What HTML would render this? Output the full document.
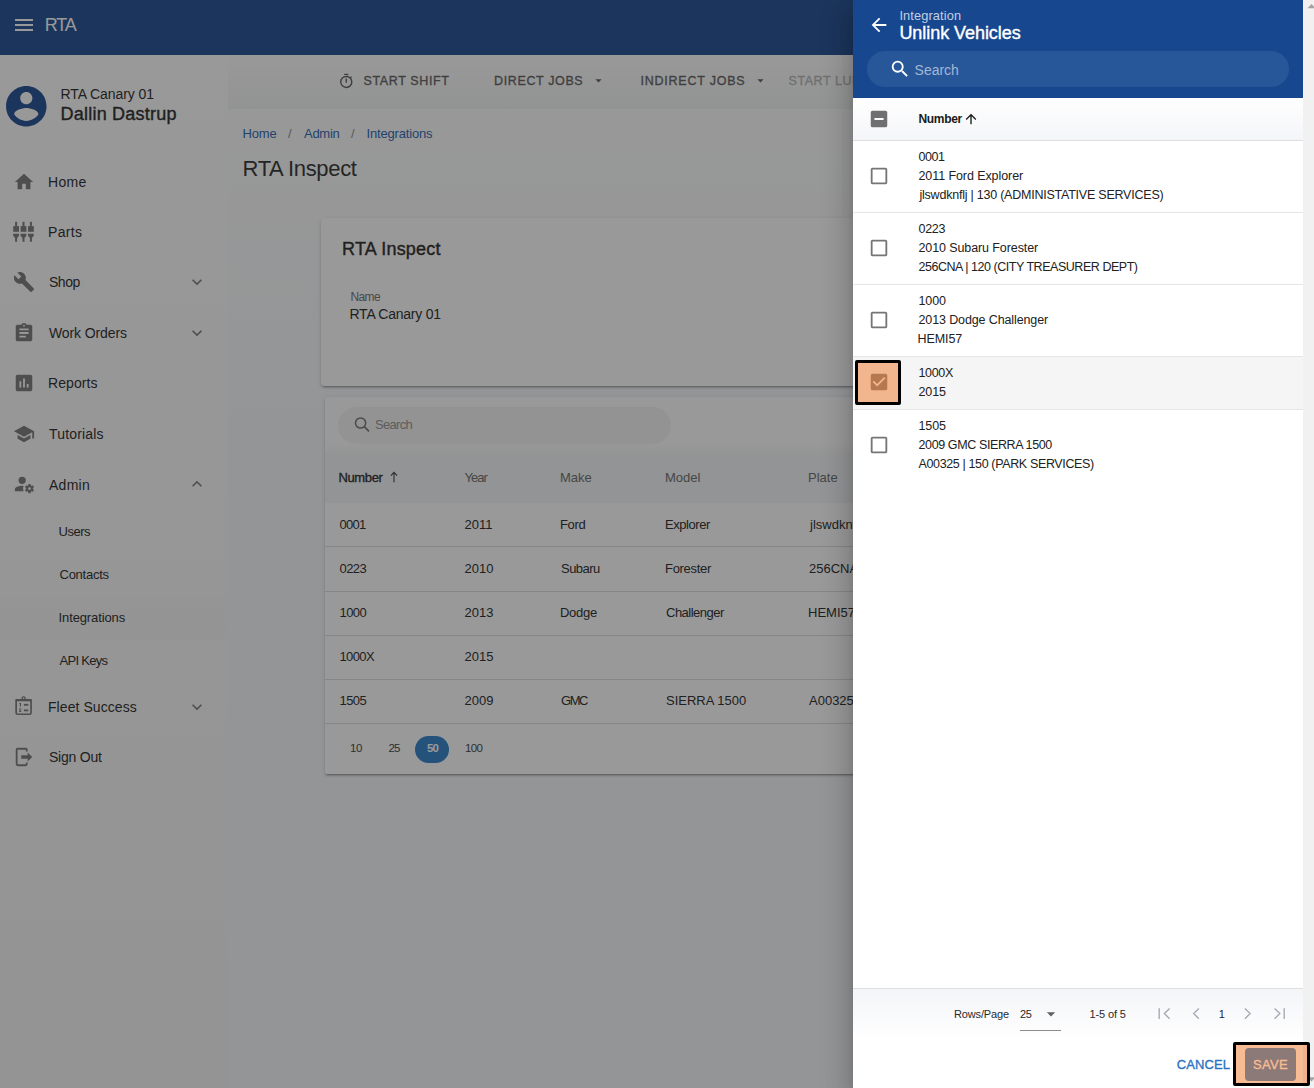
<!DOCTYPE html>
<html lang="en"><head><meta charset="utf-8"><title>RTA Inspect</title>
<style>
html,body{margin:0;padding:0}
body{width:1314px;height:1088px;overflow:hidden;position:relative;background:#fff;font-family:"Liberation Sans",sans-serif;}
.t{position:absolute;white-space:nowrap;display:block}
.i{position:absolute;display:block}
.abs{position:absolute}
#app{position:absolute;left:0;top:0;width:1303px;height:1088px;background:linear-gradient(#fefefe 108px,#f5f8fb 430px);overflow:hidden}
#scrim{position:absolute;left:0;top:0;width:1303px;height:1088px;background:rgba(33,33,33,.46)}
#drawer{position:absolute;left:853px;top:0;width:450px;height:1088px;background:#fff;box-shadow:0 8px 10px -5px rgba(0,0,0,.2),0 16px 24px 2px rgba(0,0,0,.14),0 6px 30px 5px rgba(0,0,0,.12)}
#sb{position:absolute;left:1303px;top:0;width:11px;height:1088px;background:#f1f1f1;overflow:hidden}
.card{position:absolute;background:#fff;border-radius:4px;box-shadow:0 3px 1px -2px rgba(0,0,0,.2),0 2px 2px 0 rgba(0,0,0,.14),0 1px 5px 0 rgba(0,0,0,.12)}
.hl{position:absolute;box-sizing:border-box;border:3px solid #000;border-radius:2px;background:#f7bc93}
</style></head><body>

<div id="app">
<div class="abs" style="left:0;top:55px;width:228px;height:1033px;background:linear-gradient(#fff,#f5f5f5)"></div>
<div class="abs" style="left:0;top:596px;width:228px;height:43px;background:rgba(0,0,0,.01)"></div>
<div class="abs" style="left:228px;top:55px;width:1075px;height:53.5px;background:linear-gradient(#fff,#f3f4f5)"></div>
<div class="abs" style="left:0;top:0;width:1303px;height:55px;background:#18478f"></div>
<svg class="i" style="left:12px;top:13px;" width="24" height="24" viewBox="0 0 24 24"><path fill="#fff" d="M3 18h18v-2H3v2zm0-5h18v-2H3v2zm0-7v2h18V6H3z"/></svg>
<span id="t1" class="t" style="left:44.80px;top:15.76px;font-size:18px;line-height:18px;color:#fff;letter-spacing:-1.167px;">RTA</span>
<svg class="i" style="left:1.7px;top:82.2px;" width="48.6" height="48.6" viewBox="0 0 24 24"><path fill="#18478f" d="M12 2C6.48 2 2 6.48 2 12s4.48 10 10 10 10-4.48 10-10S17.52 2 12 2zm0 3c1.66 0 3 1.34 3 3s-1.34 3-3 3-3-1.34-3-3 1.34-3 3-3zm0 14.2c-2.5 0-4.71-1.28-6-3.22.03-1.99 4-3.08 6-3.08 1.99 0 5.97 1.09 6 3.08-1.29 1.94-3.5 3.22-6 3.22z"/></svg>
<span id="t2" class="t" style="left:60.50px;top:87.15px;font-size:14px;line-height:14px;color:#212121;letter-spacing:-0.075px;">RTA Canary 01</span>
<span id="t3" class="t" style="left:60.50px;top:104.76px;font-size:18px;line-height:18px;-webkit-text-stroke:0.38px #212121;color:#212121;letter-spacing:0.228px;">Dallin Dastrup</span>
<svg class="i" style="left:12.5px;top:171px;" width="22" height="22" viewBox="0 0 24 24"><path fill="#757575" d="M10 20v-6h4v6h5v-8h3L12 3 2 12h3v8z"/></svg>
<span id="t4" class="t" style="left:48.00px;top:175.15px;font-size:14px;line-height:14px;color:#212121;letter-spacing:0.314px;">Home</span>
<svg class="i" style="left:10px;top:219px" width="28" height="26" viewBox="10 219 28 26"><g fill="#757575"><rect x="15.100000000000001" y="221.8" width="2" height="4.6"/><rect x="13.2" y="226.1" width="5.8" height="5.7"/><path d="M13.2 233.7h5.8v2.1l-1.9 2.3v3.7h-2v-3.7l-1.9-2.3z"/><rect x="22.5" y="221.8" width="2" height="4.6"/><rect x="20.6" y="226.1" width="5.8" height="5.7"/><path d="M20.6 233.7h5.8v2.1l-1.9 2.3v3.7h-2v-3.7l-1.9-2.3z"/><rect x="29.9" y="221.8" width="2" height="4.6"/><rect x="28.0" y="226.1" width="5.8" height="5.7"/><path d="M28.0 233.7h5.8v2.1l-1.9 2.3v3.7h-2v-3.7l-1.9-2.3z"/></g></svg>
<span id="t5" class="t" style="left:48.00px;top:225.15px;font-size:14px;line-height:14px;color:#212121;letter-spacing:0.331px;">Parts</span>
<svg class="i" style="left:12.5px;top:271px;" width="22" height="22" viewBox="0 0 24 24"><path fill="#757575" d="M22.7 19l-9.1-9.1c.9-2.3.4-5-1.5-6.9-2-2-5-2.4-7.4-1.3L9 6 6 9 1.6 4.7C.4 7.1.9 10.1 2.9 12.1c1.9 1.9 4.6 2.4 6.9 1.5l9.1 9.1c.4.4 1 .4 1.4 0l2.3-2.3c.5-.4.5-1.1.1-1.4z"/></svg>
<span id="t6" class="t" style="left:49.00px;top:275.15px;font-size:14px;line-height:14px;color:#212121;letter-spacing:-0.470px;">Shop</span>
<svg class="i" style="left:186.5px;top:272px;" width="20" height="20" viewBox="0 0 24 24"><path fill="#757575" d="M7.41,8.58L12,13.17L16.59,8.58L18,10L12,16L6,10L7.41,8.58Z"/></svg>
<svg class="i" style="left:12.5px;top:322px;" width="22" height="22" viewBox="0 0 24 24"><path fill="#757575" d="M19 3h-4.18C14.4 1.84 13.3 1 12 1c-1.3 0-2.4.84-2.82 2H5c-1.1 0-2 .9-2 2v14c0 1.1.9 2 2 2h14c1.1 0 2-.9 2-2V5c0-1.1-.9-2-2-2zm-7 0c.55 0 1 .45 1 1s-.45 1-1 1-1-.45-1-1 .45-1 1-1zm2 14H7v-2h7v2zm3-4H7v-2h10v2zm0-4H7V7h10v2z"/></svg>
<span id="t7" class="t" style="left:49.00px;top:326.15px;font-size:14px;line-height:14px;color:#212121;letter-spacing:-0.108px;">Work Orders</span>
<svg class="i" style="left:186.5px;top:323px;" width="20" height="20" viewBox="0 0 24 24"><path fill="#757575" d="M7.41,8.58L12,13.17L16.59,8.58L18,10L12,16L6,10L7.41,8.58Z"/></svg>
<svg class="i" style="left:12.5px;top:372px;" width="22" height="22" viewBox="0 0 24 24"><path fill="#757575" d="M19 3H5c-1.1 0-2 .9-2 2v14c0 1.1.9 2 2 2h14c1.1 0 2-.9 2-2V5c0-1.1-.9-2-2-2zM9 17H7v-7h2v7zm4 0h-2V7h2v10zm4 0h-2v-4h2v4z"/></svg>
<span id="t8" class="t" style="left:48.00px;top:376.15px;font-size:14px;line-height:14px;color:#212121;letter-spacing:0.080px;">Reports</span>
<svg class="i" style="left:12.5px;top:423px;" width="22" height="22" viewBox="0 0 24 24"><path fill="#757575" d="M5 13.18v4L12 21l7-3.82v-4L12 17l-7-3.82zM12 3L1 9l11 6 9-4.91V17h2V9L12 3z"/></svg>
<span id="t9" class="t" style="left:49.00px;top:427.15px;font-size:14px;line-height:14px;color:#212121;letter-spacing:0.167px;">Tutorials</span>
<svg class="i" style="left:12.5px;top:473px;" width="22" height="22" viewBox="0 0 24 24"><path fill="#757575" d="M10 4A4 4 0 0 0 6 8A4 4 0 0 0 10 12A4 4 0 0 0 14 8A4 4 0 0 0 10 4M17 12C16.87 12 16.76 12.09 16.74 12.21L16.55 13.53C16.25 13.66 15.96 13.82 15.7 14L14.46 13.5C14.35 13.5 14.22 13.5 14.15 13.63L13.15 15.36C13.09 15.47 13.11 15.6 13.21 15.68L14.27 16.5C14.25 16.67 14.24 16.83 14.24 17C14.24 17.17 14.25 17.33 14.27 17.5L13.21 18.32C13.12 18.4 13.09 18.53 13.15 18.64L14.15 20.37C14.21 20.5 14.34 20.5 14.46 20.5L15.7 20C15.96 20.18 16.24 20.35 16.55 20.47L16.74 21.79C16.76 21.91 16.86 22 17 22H19C19.11 22 19.22 21.91 19.24 21.79L19.43 20.47C19.73 20.34 20 20.18 20.27 20L21.5 20.5C21.63 20.5 21.76 20.5 21.83 20.37L22.83 18.64C22.89 18.53 22.86 18.4 22.77 18.32L21.7 17.5C21.72 17.33 21.74 17.17 21.74 17C21.74 16.83 21.73 16.67 21.7 16.5L22.76 15.68C22.85 15.6 22.88 15.47 22.82 15.36L21.82 13.63C21.76 13.5 21.63 13.5 21.5 13.5L20.27 14C20 13.82 19.73 13.65 19.42 13.53L19.23 12.21C19.22 12.09 19.11 12 19 12H17M10 14C5.58 14 2 15.79 2 18V20H11.68A7 7 0 0 1 11 17A7 7 0 0 1 11.64 14.09C11.11 14.03 10.56 14 10 14M18 15.5C18.83 15.5 19.5 16.17 19.5 17C19.5 17.83 18.83 18.5 18 18.5C17.16 18.5 16.5 17.83 16.5 17C16.5 16.17 17.17 15.5 18 15.5Z"/></svg>
<span id="t10" class="t" style="left:49.00px;top:477.86px;font-size:14px;line-height:14px;color:#212121;letter-spacing:0.276px;">Admin</span>
<svg class="i" style="left:186.5px;top:474px;" width="20" height="20" viewBox="0 0 24 24"><path fill="#757575" d="M7.41,15.41L12,10.83L16.59,15.41L18,14L12,8L6,14L7.41,15.41Z"/></svg>
<svg class="i" style="left:12px;top:694px" width="24" height="24" viewBox="12 694 24 24"><g fill="none" stroke="#757575"><rect x="16.15" y="699.95" width="14.9" height="14.3" rx="1.4" stroke-width="1.7"/><circle cx="23.6" cy="698.4" r="1.5" stroke-width="1.4"/></g><g fill="#757575"><rect x="15.3" y="699.1" width="16.6" height="2.2" rx="1"/><rect x="23.9" y="703.9" width="4.4" height="1.8"/><rect x="23.9" y="709.5" width="4.4" height="1.8"/><rect x="19.9" y="703.1" width="1.1" height="3.5"/><rect x="19.2" y="703.1" width="1.2" height="1"/><rect x="19" y="708.5" width="2.3" height="0.9"/><rect x="19" y="711.1" width="2.3" height="0.9"/><path d="M20.8 709l0.6 0.4-1.7 2-0.7-0.3z"/></g></svg>
<span id="t11" class="t" style="left:48.00px;top:700.15px;font-size:14px;line-height:14px;color:#212121;letter-spacing:0.069px;">Fleet Success</span>
<svg class="i" style="left:186.5px;top:697px;" width="20" height="20" viewBox="0 0 24 24"><path fill="#757575" d="M7.41,8.58L12,13.17L16.59,8.58L18,10L12,16L6,10L7.41,8.58Z"/></svg>
<svg class="i" style="left:12.5px;top:746px;" width="22" height="22" viewBox="0 0 24 24"><path fill="#757575" d="M16,17V14H9V10H16V7L21,12L16,17M14,2A2,2 0 0,1 16,4V6H14V4H5V20H14V18H16V20A2,2 0 0,1 14,22H5A2,2 0 0,1 3,20V4A2,2 0 0,1 5,2H14Z"/></svg>
<span id="t12" class="t" style="left:49.00px;top:750.15px;font-size:14px;line-height:14px;color:#212121;letter-spacing:-0.227px;">Sign Out</span>
<span id="t13" class="t" style="left:58.50px;top:525.00px;font-size:13px;line-height:13px;color:#212121;letter-spacing:-0.487px;">Users</span>
<span id="t14" class="t" style="left:59.50px;top:568.00px;font-size:13px;line-height:13px;color:#212121;letter-spacing:-0.257px;">Contacts</span>
<span id="t15" class="t" style="left:58.50px;top:611.00px;font-size:13px;line-height:13px;color:#212121;letter-spacing:-0.108px;">Integrations</span>
<span id="t16" class="t" style="left:59.50px;top:654.00px;font-size:13px;line-height:13px;color:#212121;letter-spacing:-0.709px;">API Keys</span>
<svg class="i" style="left:337.9px;top:72.8px;" width="16.5" height="16.5" viewBox="0 0 24 24"><path fill="#5a5a5a" d="M12,20A7,7 0 0,1 5,13A7,7 0 0,1 12,6A7,7 0 0,1 19,13A7,7 0 0,1 12,20M19.03,7.39L20.45,5.97C20,5.46 19.55,5 19.04,4.56L17.62,6C16.07,4.74 14.12,4 12,4A9,9 0 0,0 3,13A9,9 0 0,0 12,22C17,22 21,17.97 21,13C21,10.88 20.26,8.93 19.03,7.39M11,14H13V8H11M15,1H9V3H15V1Z"/></svg>
<span id="t17" class="t" style="left:363.50px;top:74.97px;font-size:12.5px;line-height:12.5px;-webkit-text-stroke:0.33px #5a5a5a;color:#5a5a5a;letter-spacing:0.623px;">START SHIFT</span>
<span id="t18" class="t" style="left:494.00px;top:74.97px;font-size:12.5px;line-height:12.5px;-webkit-text-stroke:0.33px #5a5a5a;color:#5a5a5a;letter-spacing:0.629px;">DIRECT JOBS</span>
<svg class="i" style="left:591.3px;top:73.1px;" width="15" height="15" viewBox="0 0 24 24"><path fill="#5a5a5a" d="M7,10L12,15L17,10H7Z"/></svg>
<span id="t19" class="t" style="left:640.40px;top:74.97px;font-size:12.5px;line-height:12.5px;-webkit-text-stroke:0.33px #5a5a5a;color:#5a5a5a;letter-spacing:0.782px;">INDIRECT JOBS</span>
<svg class="i" style="left:752.9px;top:73.1px;" width="15" height="15" viewBox="0 0 24 24"><path fill="#5a5a5a" d="M7,10L12,15L17,10H7Z"/></svg>
<span id="t20" class="t" style="left:788.50px;top:74.97px;font-size:12.5px;line-height:12.5px;-webkit-text-stroke:0.33px #b4b4b4;color:#b4b4b4;letter-spacing:0.565px;">START LUNCH</span>
<span id="t21" class="t" style="left:242.50px;top:127.00px;font-size:13px;line-height:13px;color:#1f5fae;letter-spacing:-0.149px;">Home</span>
<span id="t22" class="t" style="left:288.00px;top:127.00px;font-size:13px;line-height:13px;color:#8a8a8a;">/</span>
<span id="t23" class="t" style="left:304.00px;top:127.00px;font-size:13px;line-height:13px;color:#1f5fae;letter-spacing:-0.280px;">Admin</span>
<span id="t24" class="t" style="left:351.00px;top:127.00px;font-size:13px;line-height:13px;color:#8a8a8a;">/</span>
<span id="t25" class="t" style="left:366.50px;top:127.00px;font-size:13px;line-height:13px;color:#1f5fae;letter-spacing:-0.176px;">Integrations</span>
<span id="t26" class="t" style="left:242.50px;top:158.38px;font-size:22px;line-height:22px;color:#2a2a2a;letter-spacing:-0.340px;">RTA Inspect</span>
<div class="card" style="left:321px;top:218px;width:990px;height:167.5px"></div>
<span id="t27" class="t" style="left:342.00px;top:239.76px;font-size:18px;line-height:18px;-webkit-text-stroke:0.38px #212121;color:#212121;letter-spacing:0.213px;">RTA Inspect</span>
<span id="t28" class="t" style="left:350.50px;top:290.59px;font-size:12px;line-height:12px;color:#6b6b6b;letter-spacing:-0.612px;">Name</span>
<span id="t29" class="t" style="left:349.50px;top:307.15px;font-size:14px;line-height:14px;color:#212121;letter-spacing:-0.242px;">RTA Canary 01</span>
<div class="card" style="left:325px;top:397px;width:990px;height:376.5px;border-radius:2px"></div>
<div class="abs" style="left:338px;top:406.5px;width:333px;height:37px;border-radius:18.5px;background:#f4f4f4"></div>
<svg class="i" style="left:350px;top:412px" width="24" height="24" viewBox="350 412 24 24"><g fill="none" stroke="#707070" stroke-width="1.5"><circle cx="360.6" cy="423" r="5.1"/><path d="M364.3 426.7L369 431.3" stroke-width="1.7"/></g></svg>
<span id="t30" class="t" style="left:375.00px;top:418.00px;font-size:13px;line-height:13px;color:#8f8f8f;letter-spacing:-0.692px;">Search</span>
<div class="abs" style="left:325px;top:443px;width:990px;height:59.5px;background:linear-gradient(rgba(244,245,247,0),#f4f5f7 13px)"></div>
<span id="t31" class="t" style="left:338.50px;top:471.00px;font-size:13px;line-height:13px;-webkit-text-stroke:0.33px #212121;color:#212121;letter-spacing:-0.381px;">Number</span>
<svg class="i" style="left:388px;top:470px" width="12" height="14" viewBox="0 0 12 14"><path d="M6 12.2V2.6M2.9 5.6L6 2.4l3.1 3.2" fill="none" stroke="#3a3a3a" stroke-width="1.1"/></svg>
<span id="t32" class="t" style="left:464.50px;top:471.00px;font-size:13px;line-height:13px;color:#666;letter-spacing:-0.979px;">Year</span>
<span id="t33" class="t" style="left:560.00px;top:471.00px;font-size:13px;line-height:13px;color:#666;letter-spacing:-0.020px;">Make</span>
<span id="t34" class="t" style="left:665.00px;top:471.00px;font-size:13px;line-height:13px;color:#666;letter-spacing:-0.005px;">Model</span>
<span id="t35" class="t" style="left:808.00px;top:471.00px;font-size:13px;line-height:13px;color:#666;letter-spacing:0.025px;">Plate</span>
<span id="t36" class="t" style="left:339.50px;top:518.00px;font-size:13px;line-height:13px;color:#212121;letter-spacing:-0.730px;">0001</span>
<span id="t37" class="t" style="left:464.50px;top:518.00px;font-size:13px;line-height:13px;color:#212121;">2011</span>
<span id="t38" class="t" style="left:560.00px;top:518.00px;font-size:13px;line-height:13px;color:#212121;letter-spacing:-0.333px;">Ford</span>
<span id="t39" class="t" style="left:665.00px;top:518.00px;font-size:13px;line-height:13px;color:#212121;letter-spacing:-0.440px;">Explorer</span>
<span id="t40" class="t" style="left:810.00px;top:518.00px;font-size:13px;line-height:13px;color:#212121;">jlswdknflj</span>
<div class="abs" style="left:325px;top:546px;width:990px;height:1px;background:#dcdcdc"></div>
<span id="t41" class="t" style="left:339.50px;top:562.00px;font-size:13px;line-height:13px;color:#212121;letter-spacing:-0.563px;">0223</span>
<span id="t42" class="t" style="left:464.50px;top:562.00px;font-size:13px;line-height:13px;color:#212121;">2010</span>
<span id="t43" class="t" style="left:561.00px;top:562.00px;font-size:13px;line-height:13px;color:#212121;letter-spacing:-0.538px;">Subaru</span>
<span id="t44" class="t" style="left:665.00px;top:562.00px;font-size:13px;line-height:13px;color:#212121;letter-spacing:-0.296px;">Forester</span>
<span id="t45" class="t" style="left:809.00px;top:562.00px;font-size:13px;line-height:13px;color:#212121;">256CNA</span>
<div class="abs" style="left:325px;top:591px;width:990px;height:1px;background:#dcdcdc"></div>
<span id="t46" class="t" style="left:339.50px;top:606.00px;font-size:13px;line-height:13px;color:#212121;letter-spacing:-0.563px;">1000</span>
<span id="t47" class="t" style="left:464.50px;top:606.00px;font-size:13px;line-height:13px;color:#212121;">2013</span>
<span id="t48" class="t" style="left:560.00px;top:606.00px;font-size:13px;line-height:13px;color:#212121;letter-spacing:-0.270px;">Dodge</span>
<span id="t49" class="t" style="left:666.00px;top:606.00px;font-size:13px;line-height:13px;color:#212121;letter-spacing:-0.505px;">Challenger</span>
<span id="t50" class="t" style="left:808.00px;top:606.00px;font-size:13px;line-height:13px;color:#212121;">HEMI57</span>
<div class="abs" style="left:325px;top:635px;width:990px;height:1px;background:#dcdcdc"></div>
<span id="t51" class="t" style="left:339.50px;top:650.00px;font-size:13px;line-height:13px;color:#212121;letter-spacing:-0.605px;">1000X</span>
<span id="t52" class="t" style="left:464.50px;top:650.00px;font-size:13px;line-height:13px;color:#212121;">2015</span>
<div class="abs" style="left:325px;top:679px;width:990px;height:1px;background:#dcdcdc"></div>
<span id="t53" class="t" style="left:339.50px;top:694.00px;font-size:13px;line-height:13px;color:#212121;letter-spacing:-0.563px;">1505</span>
<span id="t54" class="t" style="left:464.50px;top:694.00px;font-size:13px;line-height:13px;color:#212121;">2009</span>
<span id="t55" class="t" style="left:561.00px;top:694.00px;font-size:13px;line-height:13px;color:#212121;letter-spacing:-1.470px;">GMC</span>
<span id="t56" class="t" style="left:666.00px;top:694.00px;font-size:13px;line-height:13px;color:#212121;">SIERRA 1500</span>
<span id="t57" class="t" style="left:809.00px;top:694.00px;font-size:13px;line-height:13px;color:#212121;">A00325</span>
<div class="abs" style="left:325px;top:723px;width:990px;height:1px;background:#dcdcdc"></div>
<span id="t58" class="t" style="left:350.00px;top:743.04px;font-size:11.5px;line-height:11.5px;color:#3a3a3a;letter-spacing:-0.396px;">10</span>
<span id="t59" class="t" style="left:388.50px;top:743.04px;font-size:11.5px;line-height:11.5px;color:#3a3a3a;letter-spacing:-0.896px;">25</span>
<div class="abs" style="left:415px;top:736px;width:34px;height:27px;border-radius:13.5px;background:#287cc8"></div>
<span id="t60" class="t" style="left:427.00px;top:743.04px;font-size:11.5px;line-height:11.5px;font-weight:700;color:#fff;letter-spacing:-0.896px;">50</span>
<span id="t61" class="t" style="left:465.00px;top:743.04px;font-size:11.5px;line-height:11.5px;color:#3a3a3a;letter-spacing:-0.646px;">100</span>
</div>
<div id="scrim"></div>
<div id="drawer">
<div class="abs" style="left:0;top:0;width:450px;height:97.5px;background:#17478f"></div>
<svg class="i" style="left:15.399999999999977px;top:13.5px;" width="22" height="22" viewBox="0 0 24 24"><path fill="#fff" d="M20 11H7.83l5.59-5.59L12 4l-8 8 8 8 1.41-1.41L7.83 13H20v-2z"/></svg>
<span id="t62" class="t" style="left:46.40px;top:10.06px;font-size:12.8px;line-height:12.8px;color:#c3cfe3;letter-spacing:0.124px;">Integration</span>
<span id="t63" class="t" style="left:46.40px;top:23.76px;font-size:18px;line-height:18px;-webkit-text-stroke:0.38px #fff;color:#fff;letter-spacing:-0.054px;">Unlink Vehicles</span>
<div class="abs" style="left:14px;top:51px;width:422px;height:36px;border-radius:18px;background:#285799"></div>
<svg class="i" style="left:36.200000000000045px;top:57.6px;" width="22" height="22" viewBox="0 0 24 24"><path fill="#fff" d="M9.5,3A6.5,6.5 0 0,1 16,9.5C16,11.11 15.41,12.59 14.44,13.73L14.71,14H15.5L20.5,19L19,20.5L14,15.5V14.71L13.73,14.44C12.59,15.41 11.11,16 9.5,16A6.5,6.5 0 0,1 3,9.5A6.5,6.5 0 0,1 9.5,3M9.5,5C7,5 5,7 5,9.5C5,12 7,14 9.5,14C12,14 14,12 14,9.5C14,7 12,5 9.5,5Z"/></svg>
<span id="t64" class="t" style="left:61.60px;top:63.45px;font-size:14px;line-height:14px;color:#a3b6d5;letter-spacing:-0.034px;">Search</span>
<div class="abs" style="left:0;top:97.5px;width:450px;height:42.5px;background:linear-gradient(#fff,#f4f5f8);border-bottom:1px solid #dedede"></div>
<svg class="i" style="left:14.5px;top:108px;" width="22" height="22" viewBox="0 0 24 24"><path fill="#6f6f6f" d="M17,13H7V11H17M19,3H5C3.89,3 3,3.89 3,5V19A2,2 0 0,0 5,21H19A2,2 0 0,0 21,19V5C21,3.89 20.1,3 19,3Z"/></svg>
<span id="t65" class="t" style="left:65.50px;top:112.84px;font-size:12px;line-height:12px;font-weight:700;color:#1a1a1a;letter-spacing:-0.334px;">Number</span>
<svg class="i" style="left:110px;top:111.3px;" width="16" height="16" viewBox="0 0 24 24"><path fill="#1a1a1a" d="M13,20H11V8L5.5,13.5L4.08,12.08L12,4.16L19.92,12.08L18.5,13.5L13,8V20Z"/></svg>
<div class="abs" style="left:0;top:140.5px;width:450px;height:71px;background:#fff;border-bottom:1px solid #e6e6e6;"></div>
<svg class="i" style="left:14.5px;top:165.0px;" width="22" height="22" viewBox="0 0 24 24"><path fill="#757575" d="M19,3H5C3.89,3 3,3.89 3,5V19A2,2 0 0,0 5,21H19A2,2 0 0,0 21,19V5C21,3.89 20.1,3 19,3M19,5V19H5V5H19Z"/></svg>
<span id="t66" class="t" style="left:65.50px;top:151.47px;font-size:12.5px;line-height:12.5px;color:#212121;letter-spacing:-0.452px;">0001</span>
<span id="t67" class="t" style="left:65.50px;top:170.47px;font-size:12.5px;line-height:12.5px;color:#212121;letter-spacing:-0.083px;">2011 Ford Explorer</span>
<span id="t68" class="t" style="left:66.50px;top:188.92px;font-size:12.5px;line-height:12.5px;color:#212121;letter-spacing:-0.229px;">jlswdknflj | 130 (ADMINISTATIVE SERVICES)</span>
<div class="abs" style="left:0;top:212.5px;width:450px;height:71px;background:#fff;border-bottom:1px solid #e6e6e6;"></div>
<svg class="i" style="left:14.5px;top:237.0px;" width="22" height="22" viewBox="0 0 24 24"><path fill="#757575" d="M19,3H5C3.89,3 3,3.89 3,5V19A2,2 0 0,0 5,21H19A2,2 0 0,0 21,19V5C21,3.89 20.1,3 19,3M19,5V19H5V5H19Z"/></svg>
<span id="t69" class="t" style="left:65.50px;top:223.47px;font-size:12.5px;line-height:12.5px;color:#212121;letter-spacing:-0.285px;">0223</span>
<span id="t70" class="t" style="left:65.50px;top:242.47px;font-size:12.5px;line-height:12.5px;color:#212121;letter-spacing:-0.102px;">2010 Subaru Forester</span>
<span id="t71" class="t" style="left:65.50px;top:260.92px;font-size:12.5px;line-height:12.5px;color:#212121;letter-spacing:-0.463px;">256CNA | 120 (CITY TREASURER DEPT)</span>
<div class="abs" style="left:0;top:284.5px;width:450px;height:71px;background:#fff;border-bottom:1px solid #e6e6e6;"></div>
<svg class="i" style="left:14.5px;top:309.0px;" width="22" height="22" viewBox="0 0 24 24"><path fill="#757575" d="M19,3H5C3.89,3 3,3.89 3,5V19A2,2 0 0,0 5,21H19A2,2 0 0,0 21,19V5C21,3.89 20.1,3 19,3M19,5V19H5V5H19Z"/></svg>
<span id="t72" class="t" style="left:65.50px;top:295.47px;font-size:12.5px;line-height:12.5px;color:#212121;letter-spacing:-0.119px;">1000</span>
<span id="t73" class="t" style="left:65.50px;top:314.47px;font-size:12.5px;line-height:12.5px;color:#212121;letter-spacing:-0.119px;">2013 Dodge Challenger</span>
<span id="t74" class="t" style="left:64.50px;top:333.47px;font-size:12.5px;line-height:12.5px;color:#212121;letter-spacing:-0.090px;">HEMI57</span>
<div class="abs" style="left:0;top:356.5px;width:450px;height:52px;background:#f5f5f5;border-bottom:1px solid #e6e6e6;"></div>
<span id="t75" class="t" style="left:65.50px;top:367.47px;font-size:12.5px;line-height:12.5px;color:#212121;letter-spacing:-0.327px;">1000X</span>
<span id="t76" class="t" style="left:65.50px;top:386.47px;font-size:12.5px;line-height:12.5px;color:#212121;letter-spacing:-0.119px;">2015</span>
<div class="abs" style="left:0;top:409.5px;width:450px;height:72px;background:#fff;"></div>
<svg class="i" style="left:14.5px;top:434.0px;" width="22" height="22" viewBox="0 0 24 24"><path fill="#757575" d="M19,3H5C3.89,3 3,3.89 3,5V19A2,2 0 0,0 5,21H19A2,2 0 0,0 21,19V5C21,3.89 20.1,3 19,3M19,5V19H5V5H19Z"/></svg>
<span id="t77" class="t" style="left:65.50px;top:420.47px;font-size:12.5px;line-height:12.5px;color:#212121;letter-spacing:-0.119px;">1505</span>
<span id="t78" class="t" style="left:65.50px;top:439.47px;font-size:12.5px;line-height:12.5px;color:#212121;letter-spacing:-0.383px;">2009 GMC SIERRA 1500</span>
<span id="t79" class="t" style="left:65.50px;top:458.47px;font-size:12.5px;line-height:12.5px;color:#212121;letter-spacing:-0.365px;">A00325 | 150 (PARK SERVICES)</span>
<div class="abs" style="left:0;top:988px;width:450px;height:52px;background:linear-gradient(#f4f5f8,#fff);border-top:1px solid #dedede"></div>
<span id="t80" class="t" style="left:101.00px;top:1008.89px;font-size:11px;line-height:11px;color:#2a2a2a;letter-spacing:-0.142px;">Rows/Page</span>
<span id="t81" class="t" style="left:167.00px;top:1008.89px;font-size:11px;line-height:11px;color:#2a2a2a;letter-spacing:-0.418px;">25</span>
<svg class="i" style="left:187.5px;top:1003.7px;" width="20" height="20" viewBox="0 0 24 24"><path fill="#616161" d="M7,10L12,15L17,10H7Z"/></svg>
<div class="abs" style="left:167px;top:1030px;width:41px;height:1px;background:#8c8c8c"></div>
<span id="t82" class="t" style="left:236.50px;top:1008.89px;font-size:11px;line-height:11px;color:#2a2a2a;letter-spacing:-0.126px;">1-5 of 5</span>
<svg class="i" style="left:297px;top:1000px" width="150" height="28" viewBox="1150 1000 150 28"><g fill="none" stroke="#a6aab2" stroke-width="1.4"><path d="M1159.2 1008.2V1019M1169.6 1008.4L1164.4 1013.6L1169.6 1018.8M1198.9 1008.4L1193.7 1013.6L1198.9 1018.8M1244.9 1008.4L1250.1 1013.6L1244.9 1018.8M1274.6 1008.4L1279.8 1013.6L1274.6 1018.8M1284.2 1008.2V1019"/></g></svg>
<span id="t83" class="t" style="left:365.70px;top:1008.89px;font-size:11px;line-height:11px;color:#1c2340;">1</span>
<span id="t84" class="t" style="left:323.80px;top:1058.40px;font-size:13px;line-height:13px;-webkit-text-stroke:0.33px #2a73c0;color:#2a73c0;letter-spacing:0.099px;">CANCEL</span>
</div>
<div id="sb"><svg class="i" style="left:0;top:0" width="17" height="17" viewBox="0 0 17 17"><path d="M4.5 8.2L8.5 4l4 4.2z" fill="#a3a3a3"/></svg><svg class="i" style="left:0;top:1071px" width="17" height="17" viewBox="0 0 17 17"><path d="M4.5 6.2L8.5 10.4l4-4.2z" fill="#a3a3a3"/></svg></div>
<div class="hl" style="left:855px;top:360px;width:46px;height:45px;background:#f2b68e"></div>
<svg class="i" style="left:867.5px;top:371px;" width="22" height="22" viewBox="0 0 24 24"><path fill="#b5784f" d="M10,17L5,12L6.41,10.58L10,14.17L17.59,6.58L19,8M19,3H5C3.89,3 3,3.89 3,5V19A2,2 0 0,0 5,21H19A2,2 0 0,0 21,19V5C21,3.89 20.1,3 19,3Z"/></svg>
<div class="hl" style="left:1233px;top:1042px;width:77px;height:44px"><div class="abs" style="left:67px;top:0;width:4px;height:38px;background:#f0b48c"></div></div>
<div class="abs" style="left:1245px;top:1048px;width:51px;height:33px;border-radius:4px;background:#8c7a78"></div>
<span id="t85" class="t" style="left:1253.00px;top:1057.90px;font-size:13px;line-height:13px;-webkit-text-stroke:0.33px #f7bc93;color:#f7bc93;letter-spacing:0.317px;">SAVE</span>
</body></html>
